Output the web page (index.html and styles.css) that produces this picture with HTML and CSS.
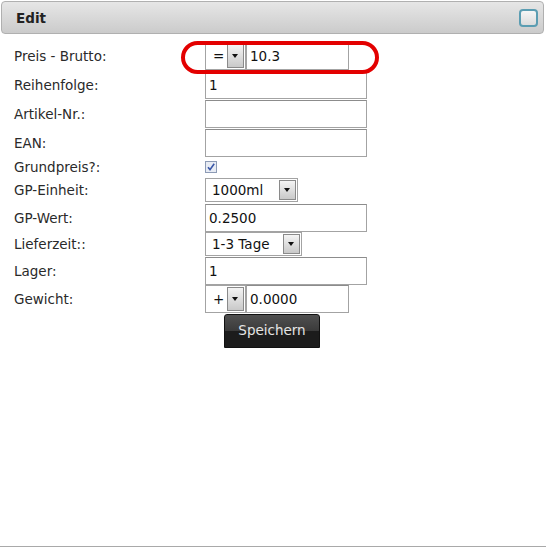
FILE: index.html
```html
<!DOCTYPE html>
<html lang="de">
	<head>
		<meta charset="UTF-8" />
		<title>Edit</title>
		<link rel="stylesheet" href="styles.css">
	</head>
	<body>
		<div class="page">
			<div class="panel">
				<div class="panel-head">
					<span class="panel-title">Edit</span>
					<span class="panel-toggle"></span>
				</div>

				<form class="form">
					<label>Preis - Brutto:</label>
					<div class="pair">
						<span class="select select-sign"><span class="select-text">=</span><span class="arrow"></span></span>
						<span class="input input-short">10.3</span>
					</div>

					<label>Reihenfolge:</label>
					<span class="input">1</span>

					<label>Artikel-Nr.:</label>
					<span class="input"></span>

					<label>EAN:</label>
					<span class="input"></span>

					<label>Grundpreis?:</label>
					<span class="check">
						<svg width="12" height="12" viewBox="0 0 12 12">
							<rect x="0.5" y="0.5" width="11" height="11" fill="#e8ecf4" stroke="#8d9bb5" />
							<path d="M3 6.2L5 8.6L9.2 2.8" fill="none" stroke="#3a57a8" stroke-width="1.6" />
						</svg>
					</span>

					<label>GP-Einheit:</label>
					<span class="select select-unit"><span class="select-text">1000ml</span><span class="arrow"></span></span>

					<label>GP-Wert:</label>
					<span class="input input-tight">0.2500</span>

					<label>Lieferzeit::</label>
					<span class="select select-time"><span class="select-text">1-3 Tage</span><span class="arrow"></span></span>

					<label>Lager:</label>
					<span class="input input-tight">1</span>

					<label>Gewicht:</label>
					<div class="pair">
						<span class="select select-sign"><span class="select-text">+</span><span class="arrow"></span></span>
						<span class="input input-short">0.0000</span>
					</div>

					<span></span>
					<button type="button" class="save">Speichern</button>
				</form>

				<!-- highlight drawn round the price field -->
				<div class="mark"></div>
			</div>
		</div>
	</body>
</html>
```

FILE: styles.css
```css
body {
	margin: 0;
	font-family: "DejaVu Sans", Verdana, sans-serif;
	font-size: 13.5px;
	color: #2a2a2a;
	background: #fff;
}
.page {
	height: 547px;
	box-sizing: border-box;
	border-bottom: 2px solid #a9a9a9;
}
.panel {
	position: relative;
}
.panel-head {
	margin: 1px 2px 0 1px;
	height: 33px;
	box-sizing: border-box;
	border: 1px solid #b0b0b0;
	border-radius: 4px;
	background: linear-gradient(#e6e6e6, #cbcbcb);
	display: flex;
	align-items: center;
	justify-content: space-between;
	padding: 0 5px 0 14px;
}
.panel-title {
	font-weight: bold;
	font-size: 13.5px;
	color: #222;
}
.panel-toggle {
	width: 19px;
	height: 18px;
	box-sizing: border-box;
	border: 2px solid #5b9db2;
	border-radius: 4px;
	background: linear-gradient(#f6f6f6, #dcdcdc);
}
.form {
	display: grid;
	grid-template-columns: 191px auto;
	justify-content: start;
	align-items: center;
	row-gap: 1px;
	padding: 8px 0 0 14px;
}
.form label {
	line-height: 16px;
}
.pair {
	display: flex;
}
.input {
	display: block;
	width: 162px;
	height: 28px;
	box-sizing: border-box;
	border: 1px solid #a3a3a3;
	border-top-color: #8c8c8c;
	padding: 0 3px;
	line-height: 26px;
	background: #fff;
	color: #111;
}
.input-tight {
	margin-bottom: -1px;
}
.input-short {
	width: 103px;
}
.select {
	display: flex;
	align-items: center;
	justify-content: space-between;
	box-sizing: border-box;
	border: 1px solid #a3a3a3;
	background: #fff;
	padding: 1px 1px 1px 7px;
	color: #111;
}
.select-sign {
	width: 41px;
	height: 28px;
	padding-left: 7px;
}
.select-unit {
	width: 93px;
	height: 24px;
	margin: 1px 0;
	padding-left: 6px;
}
.select-time {
	width: 97px;
	height: 24px;
	padding-left: 6px;
}
.arrow {
	position: relative;
	width: 17px;
	height: 100%;
	box-sizing: border-box;
	border: 1px solid #8a8a8a;
	background: linear-gradient(#f4f4f4, #c9c9c9);
}
.arrow::after {
	content: "";
	position: absolute;
	left: 4px;
	top: 50%;
	margin-top: -2px;
	border-left: 3.5px solid transparent;
	border-right: 3.5px solid transparent;
	border-top: 4px solid #111;
}
.check {
	display: flex;
	height: 12px;
	margin: 3px 0;
}
.save {
	justify-self: start;
	margin-left: 19px;
	width: 96px;
	height: 34px;
	border: 1px solid #111;
	border-radius: 3px 3px 0 0;
	background: linear-gradient(#505050 0, #3a3a3a 50%, #1c1c1c 50%, #1c1c1c 100%);
	color: #e4e4e4;
	font-family: "DejaVu Sans", Verdana, sans-serif;
	font-size: 13.5px;
	padding: 0 0 2px;
}
.mark {
	position: absolute;
	left: 181px;
	top: 40px;
	width: 198px;
	height: 33px;
	box-sizing: border-box;
	border: 4px solid #e30000;
	border-radius: 17px;
}
```
